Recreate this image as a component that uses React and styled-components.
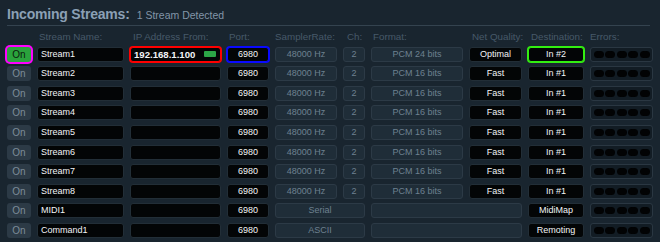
import React from 'react';
import styled, { createGlobalStyle, css } from 'styled-components';

const GlobalStyle = createGlobalStyle`
  html, body {
    margin: 0;
    padding: 0;
    background: #19252f;
  }
  body {
    font-family: "Liberation Sans", Arial, sans-serif;
  }
`;

const COLS = '24px 87px 91px 42px 62px 22px 92px 53px 56px 63px';

const Panel = styled.div`
  width: 660px;
  height: 242px;
  box-sizing: border-box;
  padding: 6px 7px 0 7px;
  background: #19252f;
  overflow: hidden;
`;

const TitleBar = styled.div`
  display: flex;
  align-items: baseline;
  gap: 7px;
  height: 19px;
  border-bottom: 1px solid #34434f;
  width: 643px;
`;

const Title = styled.span`
  font-size: 14px;
  font-weight: bold;
  color: #8ba0b5;
  letter-spacing: -0.2px;
`;

const Subtitle = styled.span`
  font-size: 10.5px;
  color: #8295a8;
`;

const Grid = styled.div`
  display: flex;
  flex-direction: column;
  gap: 4.6px;
  margin-top: 5px;
`;

const Row = styled.div`
  display: grid;
  grid-template-columns: ${COLS};
  column-gap: 6px;
  height: 15px;
`;

const HeadRow = styled(Row)`
  height: 12px;
  margin-bottom: -1px;
`;

const Label = styled.div`
  font-size: 9.8px;
  color: #475969;
  padding-left: ${p => p.$pad ?? 2}px;
  line-height: 12px;
  white-space: nowrap;
`;

const base = css`
  box-sizing: border-box;
  height: 15px;
  border-radius: 3px;
  font-size: 9px;
  line-height: 15px;
  white-space: nowrap;
  overflow: visible;
`;

const OnButton = styled.div`
  ${base};
  text-align: center;
  font-size: 10px;
  background: ${p => (p.$active ? '#2aa33c' : '#2c3a46')};
  color: ${p => (p.$active ? '#0b1a0d' : '#7d8c99')};
  ${p => p.$ring && css`box-shadow: 0 0 0 2px ${p.$ring};`}
`;

const DarkCell = styled.div`
  ${base};
  background: #030506;
  border: 1px solid #222e37;
  color: #f2f4f6;
  line-height: 13px;
  text-align: ${p => (p.$left ? 'left' : 'center')};
  padding-left: ${p => (p.$left ? 3 : 0)}px;
  ${p => p.$ring && css`
    border-color: ${p.$ring};
    box-shadow: 0 0 0 1px ${p.$ring};
  `}
`;

const IpCell = styled(DarkCell)`
  display: flex;
  align-items: center;
  justify-content: space-between;
  padding: 0 4px 0 3px;
  font-size: 9.6px;
  font-weight: ${p => (p.$bold ? 'bold' : 'normal')};
`;

const Led = styled.span`
  width: 12px;
  height: 6px;
  border-radius: 1px;
  background: #2ca646;
`;

const GreyCell = styled.div`
  ${base};
  background: #1f2d38;
  border: 1px solid #2c3a46;
  color: #6e8190;
  line-height: 13px;
  text-align: center;
  grid-column: ${p => (p.$span ? `span ${p.$span}` : 'auto')};
`;

const ErrorCell = styled.div`
  ${base};
  background: #121c24;
  border: 1px solid #2a3742;
  display: flex;
  align-items: center;
  justify-content: center;
  gap: 1.5px;
`;

const Pill = styled.span`
  width: 10px;
  height: 7px;
  border-radius: 4px;
  background: #020304;
`;

const streams = [
  { name: 'Stream1', ip: '192.168.1.100', bits: 24, quality: 'Optimal', dest: 'In #2', selected: true },
  ...[2, 3, 4, 5, 6, 7, 8].map(n => ({
    name: `Stream${n}`,
    ip: '',
    bits: 16,
    quality: 'Fast',
    dest: 'In #1',
  })),
];

const others = [
  { name: 'MIDI1', kind: 'Serial', dest: 'MidiMap' },
  { name: 'Command1', kind: 'ASCII', dest: 'Remoting' },
];

const Errors = () => (
  <ErrorCell>
    {[0, 1, 2, 3, 4].map(i => <Pill key={i} />)}
  </ErrorCell>
);

const App = () => (
  <>
    <GlobalStyle />
    <Panel>
      <TitleBar>
        <Title>Incoming Streams:</Title>
        <Subtitle>1 Stream Detected</Subtitle>
      </TitleBar>
      <Grid>
        <HeadRow>
          <span />
          <Label>Stream Name:</Label>
          <Label $pad={3}>IP Address From:</Label>
          <Label>Port:</Label>
          <Label $pad={0}>SamplerRate:</Label>
          <Label $pad={4}>Ch:</Label>
          <Label>Format:</Label>
          <Label $pad={3}>Net Quality:</Label>
          <Label $pad={3}>Destination:</Label>
          <Label $pad={0}>Errors:</Label>
        </HeadRow>
        {streams.map(s => (
          <Row key={s.name}>
            <OnButton $active={s.selected} $ring={s.selected ? '#ff00ff' : null}>On</OnButton>
            <DarkCell $left>{s.name}</DarkCell>
            <IpCell $ring={s.selected ? '#ff0000' : null} $bold={s.selected}>
              {s.ip}
              {s.selected && <Led />}
            </IpCell>
            <DarkCell $ring={s.selected ? '#0a0aff' : null}>6980</DarkCell>
            <GreyCell>48000 Hz</GreyCell>
            <GreyCell>2</GreyCell>
            <GreyCell>PCM {s.bits} bits</GreyCell>
            <DarkCell>{s.quality}</DarkCell>
            <DarkCell $ring={s.selected ? '#33ee11' : null}>{s.dest}</DarkCell>
            <Errors />
          </Row>
        ))}
        {others.map(o => (
          <Row key={o.name}>
            <OnButton>On</OnButton>
            <DarkCell $left>{o.name}</DarkCell>
            <IpCell />
            <DarkCell>6980</DarkCell>
            <GreyCell $span={2}>{o.kind}</GreyCell>
            <GreyCell $span={2} />
            <DarkCell>{o.dest}</DarkCell>
            <Errors />
          </Row>
        ))}
      </Grid>
    </Panel>
  </>
);

export default App;
